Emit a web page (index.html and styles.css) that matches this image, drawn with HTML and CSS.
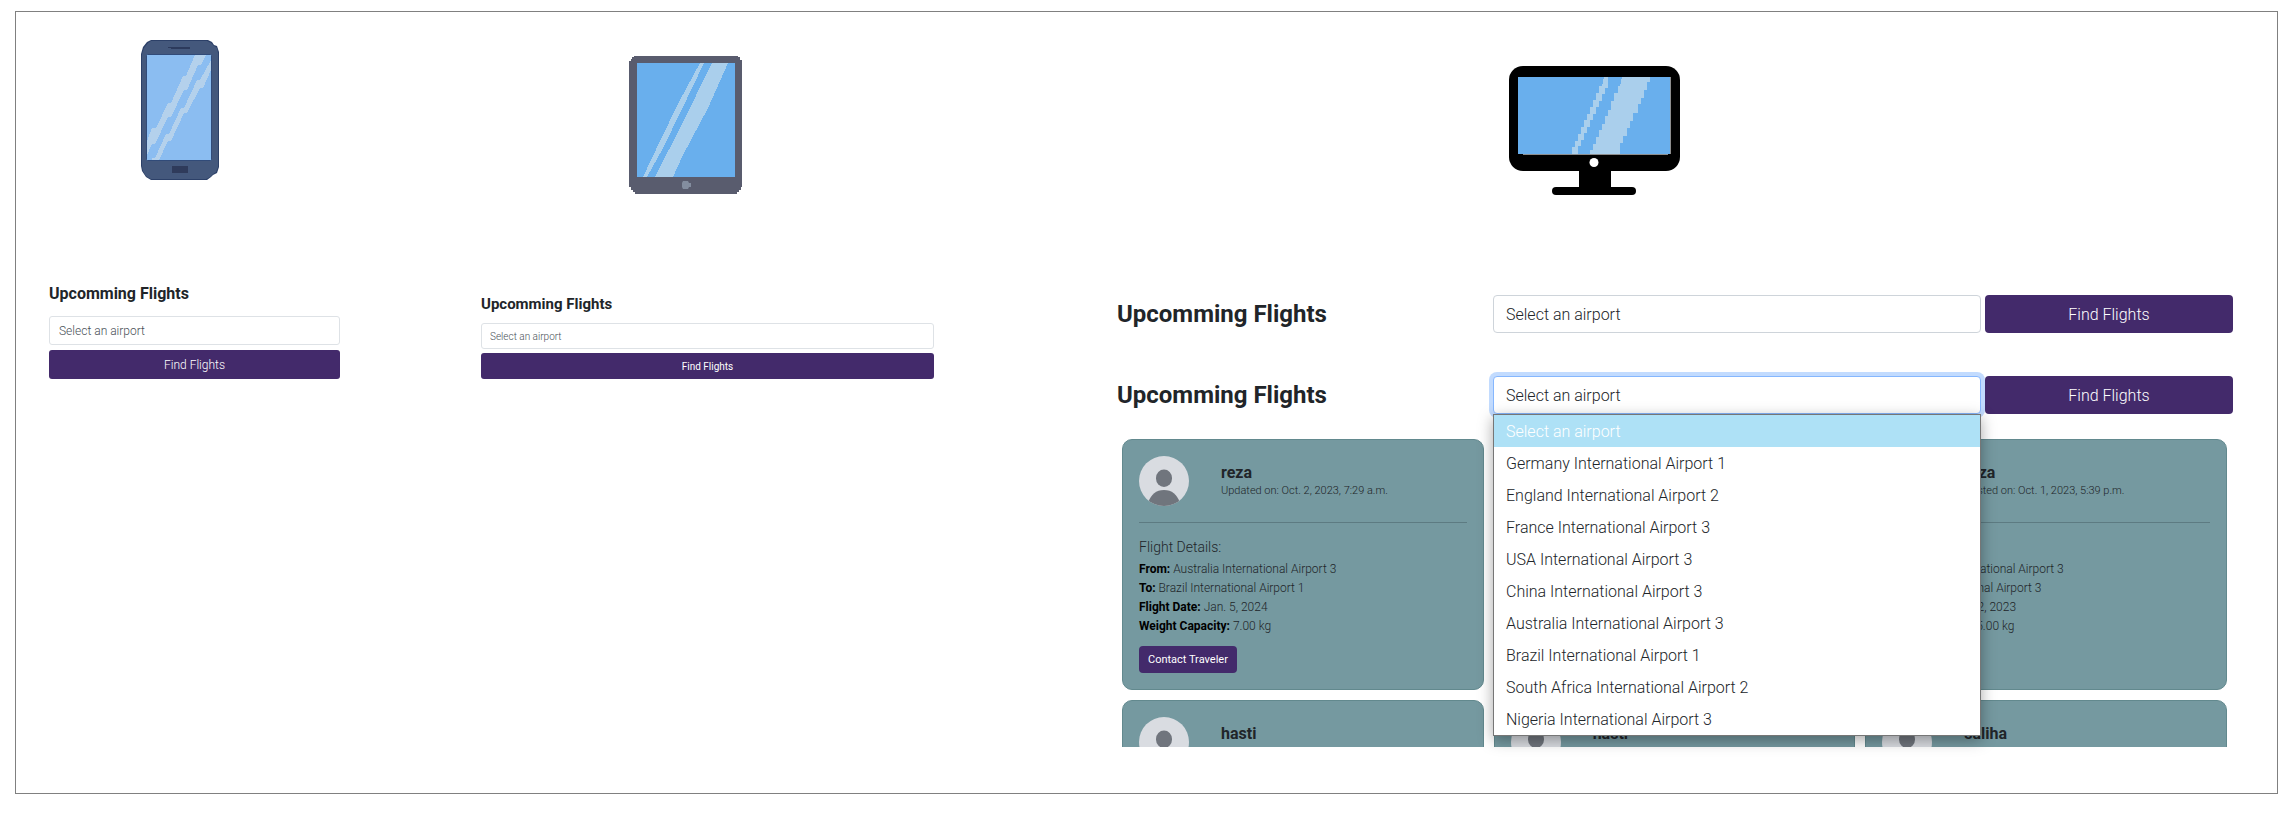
FILE: index.html
```html
<!DOCTYPE html>
<html lang="en">
<head>
<meta charset="utf-8">
<title>Upcomming Flights</title>
<link rel="stylesheet" href="styles.css">
</head>
<body>
<svg class="defs" aria-hidden="true">
  <symbol id="avatar" viewBox="0 0 50 50">
    <clipPath id="round"><circle cx="25" cy="25" r="25"/></clipPath>
    <circle cx="25" cy="25" r="25" fill="#d9dce1"/>
    <g fill="#70757d" clip-path="url(#round)">
      <rect x="17" y="13.500" width="16" height="17.500" rx="8" ry="8.500"/>
      <path d="M9.500 46C12 38.500 17 34 25 34s13 4.500 15.500 12L37 50H13z"/>
    </g>
  </symbol>
</svg>
<main class="board">
  <section class="column phone">
    <div class="device">
      <svg width="78" height="140" viewBox="0 0 78 140" role="img" aria-label="Phone">
        <path d="M10 0h57l4 2 2 3 3 1 2 6v115l-2 6-4 2-2 2-4 3H10l-5-3-4-6-1-5V14l2-7 4-5z" fill="#2c4068"/>
        <path d="M10 1h56l4 2 3 3 3 2 1 5v114l-2 5-3 2-3 3-4 2H10l-5-3-3-5-1-5V14l2-6 4-5z" fill="#44587c"/>
        <path d="M27 7h22v2H30v-1h-3z" fill="#2c3a5c"/>
        <rect x="5.500" y="14.500" width="65" height="106" rx="1" fill="#8bbdf1" stroke="#314b79"/>
        <g fill="#b4d1ec" shape-rendering="crispEdges">
          <path d="M54 15h11l-5 10h-3L46 50h-3L30 77h-3L14 104h-3l-5 11v-14l5-13h4l12-25h3l12-27h3z"/>
          <path d="M70 20v10l-8 18h-3L46 73h-3L30 101h-3l-9 19h-7v-2h3l11-24h3l12-26h3l13-28h3z"/>
        </g>
        <rect x="31" y="126" width="16" height="7" fill="#2f3b5b"/>
      </svg>
    </div>
    <form class="stack">
      <h2 class="title"><label for="airport-phone">Upcomming Flights</label></h2>
      <select class="field" id="airport-phone"><option>Select an airport</option></select>
      <button class="find" type="button">Find Flights</button>
    </form>
  </section>

  <section class="column tablet">
    <div class="device">
      <svg width="113" height="138" viewBox="0 0 113 138" role="img" aria-label="Tablet">
        <path d="M5 0h104v1h2v3h2v127h-1v3h-2v2h-2v2H6v-2H4v-2H2v-3H0V5h2V3h1V1h2z" fill="#595c6e"/>
        <rect x="8" y="7" width="98" height="114" fill="#69afed"/>
        <g fill="#aacfec" shape-rendering="crispEdges">
          <path d="M71 7h4L53 53 33 94l-15 27h-4l17-36 19-39z"/>
          <path d="M83 7h16L79 52 54 99l-10 22H26l26-51z"/>
        </g>
        <path d="M54 125h5l1 2h2v4h-2l-1 2h-5l-1-2v-4z" fill="#838d9f"/>
      </svg>
    </div>
    <form class="stack">
      <h2 class="title"><label for="airport-tablet">Upcomming Flights</label></h2>
      <select class="field" id="airport-tablet"><option>Select an airport</option></select>
      <button class="find" type="button">Find Flights</button>
    </form>
  </section>

  <section class="column desktop">
    <div class="device">
      <svg width="171" height="129" viewBox="0 0 171 129" role="img" aria-label="Desktop monitor">
        <rect width="171" height="105" rx="14"/>
        <rect x="70" y="100" width="32" height="24"/>
        <rect x="43" y="121" width="84" height="8" rx="4"/>
        <rect x="9" y="11" width="152" height="77" fill="#69afed"/>
        <path d="M14 88.500h145M161.500 11v77" stroke="#8d8d8d"/>
        <g fill="#aacfec" shape-rendering="crispEdges">
          <path d="M95 11h4v11h-3v6h-3v7h-3v6h-3v7h-3v6h-3v7h-3v6h-3v7h-3v6h-3v8h-6v-7h3v-6h3v-7h3v-7h3v-7h3v-6h3v-7h3v-7h3v-7h3v-7h3z"/>
          <path d="M113 11h28v5h-3v8h-3v8h-3v6h-3v9h-5v8h-3v7h-3v8h-4v7h-3v11H81v-4h3v-6h3v-7h3v-7h3v-6h3v-8h3v-6h3v-9h3v-8h4v-7h2z"/>
        </g>
        <circle cx="85" cy="96.500" r="4.500" fill="#fff"/>
      </svg>
    </div>

    <form class="row">
      <h2 class="title"><label for="airport-closed">Upcomming Flights</label></h2>
      <select class="field" id="airport-closed"><option>Select an airport</option></select>
      <button class="find" type="button">Find Flights</button>
    </form>

    <form class="row">
      <h2 class="title"><label for="airport-open">Upcomming Flights</label></h2>
      <div class="picker">
        <select class="field active" id="airport-open"><option>Select an airport</option></select>
        <ul class="menu" role="listbox" aria-label="Airports">
          <li role="option" aria-selected="true">Select an airport</li>
          <li role="option">Germany International Airport 1</li>
          <li role="option">England International Airport 2</li>
          <li role="option">France International Airport 3</li>
          <li role="option">USA International Airport 3</li>
          <li role="option">China International Airport 3</li>
          <li role="option">Australia International Airport 3</li>
          <li role="option">Brazil International Airport 1</li>
          <li role="option">South Africa International Airport 2</li>
          <li role="option">Nigeria International Airport 3</li>
        </ul>
      </div>
      <button class="find" type="button">Find Flights</button>
    </form>

    <div class="cards">
      <article class="card">
        <header class="traveler">
          <svg class="avatar"><use href="#avatar"/></svg>
          <div><h3>reza</h3><p>Updated on: Oct. 2, 2023, 7:29 a.m.</p></div>
        </header>
        <h4>Flight Details:</h4>
        <p><b>From:</b> Australia International Airport 3</p>
        <p><b>To:</b> Brazil International Airport 1</p>
        <p><b>Flight Date:</b> Jan. 5, 2024</p>
        <p><b>Weight Capacity:</b> 7.00 kg</p>
        <button class="contact" type="button">Contact Traveler</button>
      </article>
      <article class="card"></article>
      <article class="card">
        <header class="traveler">
          <svg class="avatar"><use href="#avatar"/></svg>
          <div><h3>reza</h3><p>Posted on: Oct. 1, 2023, 5:39 p.m.</p></div>
        </header>
        <h4>Flight Details:</h4>
        <p><b>From:</b> China International Airport 3</p>
        <p><b>To:</b> USA International Airport 3</p>
        <p><b>Flight Date:</b> Oct. 22, 2023</p>
        <p><b>Weight Capacity:</b> 5.00 kg</p>
      </article>
      <article class="card">
        <header class="traveler"><svg class="avatar"><use href="#avatar"/></svg><div><h3>hasti</h3><p>&nbsp;</p></div></header>
      </article>
      <article class="card">
        <header class="traveler"><svg class="avatar"><use href="#avatar"/></svg><div><h3>hasti</h3><p>&nbsp;</p></div></header>
      </article>
      <article class="card">
        <header class="traveler"><svg class="avatar"><use href="#avatar"/></svg><div><h3>saliha</h3><p>&nbsp;</p></div></header>
      </article>
    </div>
  </section>
</main>
</body>
</html>
```
FILE: styles.css
```css
* { box-sizing: border-box; }

body {
  margin: 0;
  padding: 11px 16px 22px 15px;
  background: #fff;
  color: #212529;
  font-family: Roboto, "Liberation Sans", sans-serif;
  font-weight: 300;
}

h2, h3, h4, p, ul { margin: 0; padding: 0; }

.defs { position: absolute; width: 0; height: 0; }

.board {
  display: grid;
  grid-template-columns: 394fr 590fr 1277fr;
  min-height: calc(100vh - 33px);
  border: 1px solid #808080;
}

.column { min-width: 0; }
.phone { padding: 28px 70px 0 33px; }
.tablet { padding: 44px 66px 0 71px; }
.desktop { padding: 54px 44px 46px 117px; }

.device svg { display: block; }
.phone .device { height: 241px; padding-left: 92px; }
.tablet .device { height: 236px; padding-left: 148px; }
.desktop .device { height: 229px; padding-left: 392px; }

.title { font-weight: 700; }

.field {
  appearance: none;
  display: block;
  width: 100%;
  border: 1px solid #ced4da;
  border-radius: 4px;
  background: #fff;
  color: #212529;
  font: inherit;
}

.find, .contact {
  border: 0;
  border-radius: 4px;
  background: #432a6b;
  color: #fff;
  font: inherit;
}

.stack { display: flex; flex-direction: column; }
.stack .field { border-color: #dee2e6; border-radius: 3px; }
.stack .find { border-radius: 3px; }

.phone .title { font-size: 16px; line-height: 26px; margin-bottom: 9px; }
.phone .field { height: 29px; padding: 0 9px; margin-bottom: 5px; font-size: 12px; color: #495057; }
.phone .find { height: 29px; font-size: 12px; }

.tablet .title { font-size: 15px; line-height: 24px; margin-bottom: 7px; }
.tablet .field { height: 26px; padding: 0 8px; margin-bottom: 4px; font-size: 10px; color: #495057; }
.tablet .find { height: 26px; font-size: 10px; font-weight: 400; }

.row {
  display: grid;
  grid-template-columns: 372fr 488fr 248fr;
  column-gap: 4px;
  align-items: center;
  font-size: 16px;
}
.row + .row { margin-top: 43px; }
.row .title { font-size: 24px; line-height: 30px; }
.row .field { height: 38px; padding: 0 12px; }
.row .find { height: 38px; }

.picker { position: relative; }
.row .active { border-color: #86b7fe; box-shadow: 0 0 0 4px #c2dbfe; }

.menu {
  position: absolute;
  top: 100%;
  left: 0;
  right: 0;
  z-index: 1;
  border: 1px solid #767676;
  background: #fff;
  box-shadow: 0 4px 14px rgba(0, 0, 0, .35);
  list-style: none;
}
.menu li { padding: 2px 12px 0; line-height: 30px; }
.menu [aria-selected="true"] { background: #aee1f6; color: #fff; }

.cards {
  display: grid;
  grid-template-columns: repeat(3, 1fr);
  gap: 10px;
  height: 308px;
  margin: 25px 6px 0 5px;
  overflow: hidden;
}

.card {
  padding: 16px;
  border: 1px solid #62898e;
  border-radius: 10px;
  background: #7599a0;
  font-size: 12px;
  line-height: 19px;
}
.card b { color: #000; font-weight: 700; }
.card h4 { font-size: 14px; font-weight: 300; line-height: 20px; margin-bottom: 3px; }

.traveler {
  display: flex;
  gap: 32px;
  padding-bottom: 16px;
  margin-bottom: 14px;
  border-bottom: 1px solid #5d7b82;
}
.traveler div { padding-top: 7px; }
.traveler h3 { font-size: 16px; line-height: 20px; font-weight: 700; }
.traveler p { font-size: 11px; line-height: 15px; }
.avatar { width: 50px; height: 50px; }

.contact { display: block; height: 27px; margin-top: 10px; padding: 0 9px; font-size: 11px; font-weight: 400; }
```
